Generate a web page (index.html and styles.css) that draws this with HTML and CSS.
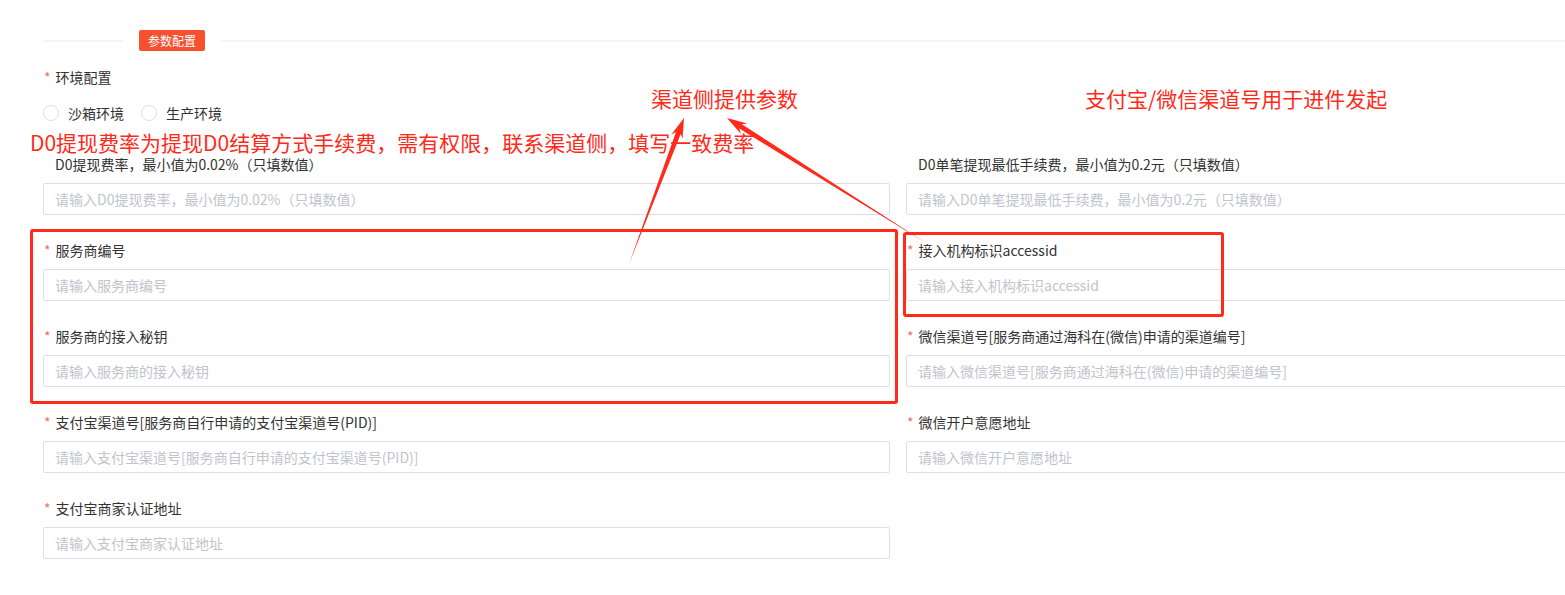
FILE: index.html
```html
<!DOCTYPE html>
<html lang="zh-CN">
<head>
    <meta charset="UTF-8">
    <meta name="viewport" content="width=device-width, initial-scale=1.0">
    <title>参数配置</title>
    <link rel="stylesheet" href="styles.css">
</head>
<body>
    <div class="page">
        <div class="section-title">
            <span class="line line-short"></span>
            <span class="tag">参数配置</span>
            <span class="line"></span>
        </div>

        <div class="env">
            <div class="label required">环境配置</div>
            <div class="radios">
                <label class="radio"><span class="circle"></span>沙箱环境</label>
                <label class="radio"><span class="circle"></span>生产环境</label>
            </div>
        </div>

        <div class="form">
            <div class="item">
                <div class="label">D0提现费率，最小值为0.02%（只填数值）</div>
                <input class="input" type="text" placeholder="请输入D0提现费率，最小值为0.02%（只填数值）">
            </div>
            <div class="item">
                <div class="label">D0单笔提现最低手续费，最小值为0.2元（只填数值）</div>
                <input class="input" type="text" placeholder="请输入D0单笔提现最低手续费，最小值为0.2元（只填数值）">
            </div>

            <div class="item">
                <div class="label required">服务商编号</div>
                <input class="input" type="text" placeholder="请输入服务商编号">
            </div>
            <div class="item">
                <div class="label required">接入机构标识accessid</div>
                <input class="input" type="text" placeholder="请输入接入机构标识accessid">
            </div>

            <div class="item">
                <div class="label required">服务商的接入秘钥</div>
                <input class="input" type="text" placeholder="请输入服务商的接入秘钥">
            </div>
            <div class="item">
                <div class="label required">微信渠道号[服务商通过海科在(微信)申请的渠道编号]</div>
                <input class="input" type="text" placeholder="请输入微信渠道号[服务商通过海科在(微信)申请的渠道编号]">
            </div>

            <div class="item">
                <div class="label required">支付宝渠道号[服务商自行申请的支付宝渠道号(PID)]</div>
                <input class="input" type="text" placeholder="请输入支付宝渠道号[服务商自行申请的支付宝渠道号(PID)]">
            </div>
            <div class="item">
                <div class="label required">微信开户意愿地址</div>
                <input class="input" type="text" placeholder="请输入微信开户意愿地址">
            </div>

            <div class="item">
                <div class="label required">支付宝商家认证地址</div>
                <input class="input" type="text" placeholder="请输入支付宝商家认证地址">
            </div>
        </div>
    </div>

    <!-- screenshot annotations -->
    <div class="note note-fee">D0提现费率为提现D0结算方式手续费，需有权限，联系渠道侧，填写一致费率</div>
    <div class="note note-channel">渠道侧提供参数</div>
    <div class="note note-pay">支付宝/微信渠道号用于进件发起</div>
    <div class="mark mark-left"></div>
    <div class="mark mark-right"></div>
    <svg class="arrows" width="1565" height="595" viewBox="0 0 1565 595">
        <polygon points="684,118 682.5,138.8 680.7,133.9 629,264 676,132.1 671.3,134.6" fill="#ff2a1a"/>
        <polygon points="727,118 740.8,133.7 739.3,128.6 926,243 741.9,124.3 747.1,123.5" fill="#ff2a1a"/>
    </svg>
</body>
</html>
```

FILE: styles.css
```css
body {
    margin: 0;
    background: #fff;
    font-family: "Noto Sans CJK SC", "Noto Sans", sans-serif;
    font-size: 14px;
    color: #333;
    overflow: hidden;
    height: 595px;
}

.page {
    width: 1710px;
    margin-left: 43px;
    padding-top: 30px;
}

.section-title {
    display: flex;
    align-items: center;
    height: 21px;
}

.section-title .line {
    flex: 1;
    height: 2px;
    background: #f5f5f5;
}

.section-title .line-short {
    flex: none;
    width: 80px;
}

.tag {
    margin: 0 16px;
    padding: 0 9px;
    height: 21px;
    line-height: 21px;
    font-size: 12px;
    color: #fff;
    background: #f5502f;
    border-radius: 2px;
}

.env {
    margin-top: 7px;
}

.label {
    line-height: 38px;
    padding-left: 12px;
    white-space: nowrap;
}

.label.required {
    padding-left: 0;
}

.label.required::before {
    content: "*";
    color: #f56c6c;
    margin-right: 5px;
    margin-left: 1px;
}

.radios {
    display: flex;
    gap: 17px;
    margin-top: 7px;
    height: 20px;
    align-items: center;
}

.radio {
    display: flex;
    align-items: center;
    color: #333;
}

.radio .circle {
    width: 14px;
    height: 14px;
    border: 1px solid #dcdfe6;
    border-radius: 50%;
    margin-right: 9px;
}

.form {
    display: grid;
    grid-template-columns: 847px 847px;
    column-gap: 16px;
    row-gap: 16px;
    margin-top: 22px;
}

.input {
    display: block;
    box-sizing: border-box;
    width: 100%;
    height: 32px;
    border: 1px solid #dcdfe6;
    border-radius: 2px;
    padding: 0 11px;
    font-family: inherit;
    font-size: 14px;
    color: #333;
    outline: none;
}

.input::placeholder {
    color: #c0c4cc;
}

/* annotations drawn over the form */
.note {
    position: absolute;
    font-size: 21px;
    line-height: 1;
    color: #ff2a1a;
    white-space: nowrap;
}

.note-fee {
    left: 30px;
    top: 132px;
}

.note-channel {
    left: 651px;
    top: 88px;
}

.note-pay {
    left: 1085px;
    top: 88px;
}

.mark {
    position: absolute;
    border: 3px solid #ff2a1a;
    border-radius: 3px;
    box-sizing: border-box;
}

.mark-left {
    left: 30px;
    top: 229px;
    width: 868px;
    height: 175px;
}

.mark-right {
    left: 903px;
    top: 232px;
    width: 321px;
    height: 85px;
}

.arrows {
    position: absolute;
    left: 0;
    top: 0;
    pointer-events: none;
}
```
